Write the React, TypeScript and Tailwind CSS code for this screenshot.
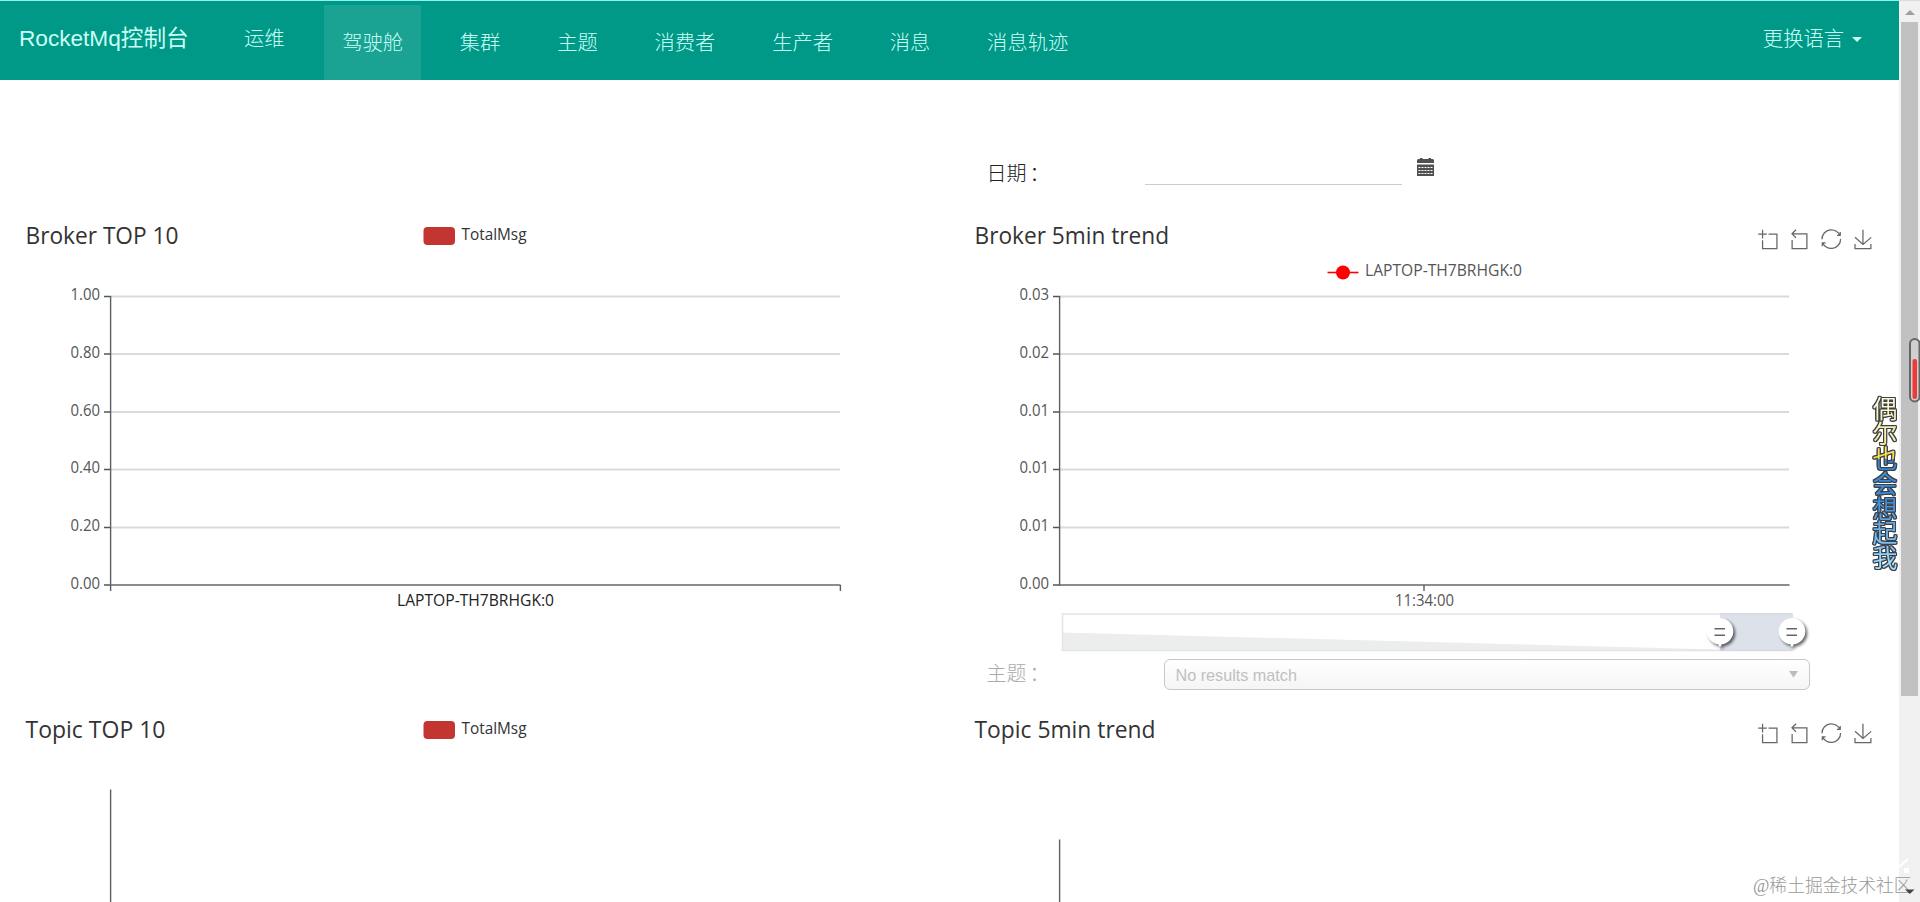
import React from "react";

const ICONS = [
  { x: 1758.2, d: "M0,13.5h26.9 M13.5,26.9V0 M32.1,13.5H58V58H13.5 V32.1", dx: 0, dy: 0, s: 0.323 },
  { x: 1792, d: "M22,1.4L9.9,13.5l12.3,12.3 M10.3,13.5H54.9v44.6 H10.3v-26", dx: -9.9, dy: -1.4, s: 0.331 },
  {
    x: 1822,
    d: "M47,18.9h9.8V8.7 M56.3,20.1 C52.1,9,40.5,0.6,26.8,2.1C12.6,3.7,1.6,16.2,2.1,30.6 M13,41.1H3.1v10.2 M3.7,39.9c4.2,11.1,15.8,19.5,29.5,18 c14.2-1.6,25.2-14.1,24.7-28.5",
    dx: -2.1,
    dy: -2,
    s: 0.333,
  },
  { x: 1855, d: "M4.7,22.9L29.3,45.5L54.7,23.4M4.6,43.6L4.6,58L53.8,58L53.8,43.6M29.2,45.1L29.2,0", dx: -4.6, dy: 0, s: 0.323 },
];

const GRID = [91.5, 149, 207, 264.5, 322.5, 380];

function T({ x, y, w, size = 15.5, fill = "#555", children }: { x: number; y: number; w: number; size?: number; fill?: string; children: string }) {
  return (
    <text x={x} y={y} fontSize={size} fill={fill} textLength={w} lengthAdjust="spacingAndGlyphs">
      {children}
    </text>
  );
}

function Toolbox() {
  return (
    <g fill="none" stroke="#666">
      {ICONS.map((i) => (
        <g key={i.x} transform={`translate(${i.x - 949} 24.8) scale(${i.s}) translate(${i.dx} ${i.dy})`}>
          <path d={i.d} strokeWidth={1.25 / i.s} />
        </g>
      ))}
    </g>
  );
}

function Axes({ labels }: { labels: string[] }) {
  return (
    <g>
      {GRID.map((y, i) => (
        <g key={y}>
          {i < 5 && <line x1="111" x2="840" y1={y} y2={y} stroke="#dadada" strokeWidth="1.9" />}
          <line x1="104" x2="111" y1={y} y2={y} stroke="#555" strokeWidth="1.5" />
          <T x={70.5} y={y + 3.5} w={29.5}>
            {labels[i]}
          </T>
        </g>
      ))}
      <line x1="110.6" x2="110.6" y1="91" y2="380" stroke="#5c5f62" strokeWidth="1.4" />
      <line x1="110" x2="840.5" y1="380" y2="380" stroke="#666" strokeWidth="1.7" />
    </g>
  );
}

function TopLegend() {
  return (
    <g>
      <rect x="423.5" y="22" width="31.5" height="18" rx="4" fill="#c23531" />
      <T x={461.5} y={35.4} w={65} fill="#333">
        TotalMsg
      </T>
    </g>
  );
}

function Handle({ x }: { x: number }) {
  return (
    <g>
      <path
        d={`M${x - 1.2} 441.5V439.6A13.3 13.3 0 1 1 ${x + 1.2} 439.6V441.5Z`}
        fill="#fff"
        className="drop-shadow-[2px_2px_1.5px_rgba(0,0,0,0.6)]"
      />
      <path d={`M${x - 5.5} 423.7h10.5M${x - 5.5} 430.3h10.5`} stroke="#666" strokeWidth="1.5" />
    </g>
  );
}

function Chart({ height, children }: { height: number; children: React.ReactNode }) {
  return (
    <svg width="949" height={height} className="block shrink-0 font-['Open_Sans','Noto_Sans',sans-serif]">
      {children}
    </svg>
  );
}

function NavItem({ label, active }: { label: string; active?: boolean }) {
  return <a className={`flex h-[75px] items-center px-[18.2px] pt-[2px] ${active ? "bg-white/10" : ""}`}>{label}</a>;
}

export default function App() {
  return (
    <div className="relative flex h-[902px] w-[1920px] overflow-hidden bg-white font-['Liberation_Sans','Noto_Sans_CJK_SC',sans-serif] text-[#333]">
      <div className="flex w-[1899px] flex-col">
        <header className="flex h-20 shrink-0 items-start border-t border-[#8ff0f0] bg-[#009886] text-[20.3px] font-light whitespace-nowrap text-[#c9fff6]">
          <span className="ml-[19px] w-[225px] pt-[20px] text-[22.7px] leading-[34px] font-normal tracking-[-0.04px]">RocketMq控制台</span>
          <span className="w-[80px] pt-[23px] leading-[30px]">运维</span>
          <nav className="flex gap-[20.4px] pt-1">
            <NavItem label="驾驶舱" active />
            <NavItem label="集群" />
            <NavItem label="主题" />
            <NavItem label="消费者" />
            <NavItem label="生产者" />
            <NavItem label="消息" />
            <NavItem label="消息轨迹" />
          </nav>
          <span className="mr-[37px] ml-auto flex items-center gap-[8px] pt-[23px] leading-[30px]">
            更换语言
            <svg width="10" height="5" className="block">
              <path d="M0 0h10l-5 5z" fill="#c9fff6" />
            </svg>
          </span>
        </header>

        <main className="flex min-h-0 flex-1">
          <section className="flex w-[949px] shrink-0 flex-col pt-[125px]">
            <Chart height={494}>
              <T x={25.5} y={39} w={153} size={23.4} fill="#333">
                Broker TOP 10
              </T>
              <TopLegend />
              <Axes labels={["1.00", "0.80", "0.60", "0.40", "0.20", "0.00"]} />
              <path d="M110.6 380v6M840.4 380v6" stroke="#5c5f62" strokeWidth="1.4" />
              <T x={397} y={400.7} w={157} fill="#222">
                LAPTOP-TH7BRHGK:0
              </T>
            </Chart>
            <Chart height={203}>
              <T x={25.5} y={39} w={140} size={23.4} fill="#333">
                Topic TOP 10
              </T>
              <TopLegend />
              <line x1="110.6" x2="110.6" y1="90.5" y2="203" stroke="#5c5f62" strokeWidth="1.4" />
            </Chart>
          </section>

          <section className="flex w-[950px] shrink-0 flex-col">
            <div className="flex h-[125px] shrink-0 items-start pl-[37.5px]">
              <span className="flex w-[158.5px] gap-[3px] pt-[79px] text-[20px] leading-[30px] font-light text-[#222]">
                <span>日期</span>
                <span>：</span>
              </span>
              <span className="h-[105px] w-[257px] border-b border-[#ccc]" />
              <svg width="17" height="18" className="mt-[78px] ml-[15px] block">
                <path d="M0 5V2.5Q0 1 1.5 1H3V0h2.5v1h6V0H14v1h1.5Q17 1 17 2.5V5z" fill="#505050" />
                <path d="M0 6.5h17V18H0z" fill="#505050" />
                <path d="M1.5 9.5h14M1.5 12.5h14M1.5 15.5h14" stroke="#fff" strokeWidth="1.2" strokeDasharray="2 1" />
              </svg>
            </div>
            <Chart height={450}>
              <T x={25.5} y={39} w={194.5} size={23.4} fill="#333">
                Broker 5min trend
              </T>
              <Toolbox />
              <path d="M378.5 67.5h31" stroke="#f00" strokeWidth="1.6" />
              <circle cx="394" cy="67.5" r="7" fill="#f00" />
              <T x={416} y={71.4} w={157}>
                LAPTOP-TH7BRHGK:0
              </T>
              <Axes labels={["0.03", "0.02", "0.01", "0.01", "0.01", "0.00"]} />
              <path d="M475 380v6" stroke="#5c5f62" strokeWidth="1.4" />
              <T x={446} y={400.7} w={59}>
                11:34:00
              </T>
              <path d="M114 427.5L771 444.5H843V445.5H114z" fill="#eceeee" />
              <rect x="113.5" y="409" width="730" height="36.5" fill="none" stroke="#e4e4e4" strokeWidth="1.5" />
              <rect x="771" y="408.5" width="72" height="37.5" fill="#dce1ea" />
              <path d="M771 409h72M771 445.3h72" stroke="#d6dade" strokeWidth="1.5" />
              <Handle x={771} />
              <Handle x={843} />
            </Chart>
            <div className="flex h-[44px] shrink-0 items-start pl-[37.5px] text-[#aaa]">
              <span className="flex w-[177.5px] gap-[3px] pt-[4px] text-[20px] leading-[30px] font-light">
                <span>主题</span>
                <span>：</span>
              </span>
              <span className="mt-[4px] flex h-[31px] w-[646px] items-center justify-between rounded-[6px] border border-[#c8c8c8] bg-linear-to-b from-white to-[#f5f5f5] pr-[11px] pl-[10.5px] text-[16.2px] text-[#c0c0c0]">
                <span className="pt-[2px]">No results match</span>
                <svg width="9" height="7" className="mb-px block">
                  <path d="M0 0h9L4.5 6.5z" fill="#bbb" />
                </svg>
              </span>
            </div>
            <Chart height={203}>
              <T x={25.5} y={39} w={181} size={23.4} fill="#333">
                Topic 5min trend
              </T>
              <Toolbox />
              <line x1="110.6" x2="110.6" y1="140.5" y2="203" stroke="#5c5f62" strokeWidth="1.4" />
            </Chart>
          </section>
        </main>
      </div>

      <aside className="flex w-[21px] flex-col items-center border-t border-[#d8dcdc] bg-[#f1f1f1]">
        <svg width="10" height="5" className="mt-[9px] mb-[7px] block shrink-0">
          <path d="M0 5L5 0l5 5z" fill="#a0a0a0" />
        </svg>
        <span className="h-[674px] w-[17px] shrink-0 bg-[#c1c1c1]" />
      </aside>

      <svg width="12" height="68" className="absolute top-[336px] left-[1908px]">
        <rect x="2" y="3" width="9.5" height="62.5" rx="4.75" fill="#d0d0d0" stroke="#666" strokeWidth="2" />
        <rect x="4.5" y="23" width="4.5" height="40" rx="2" fill="#f03a3a" />
      </svg>
      <div className="absolute top-[396px] left-[1870px] [filter:drop-shadow(1px_0_0_#3c3f46)_drop-shadow(-1px_0_0_#3c3f46)_drop-shadow(0_1px_0_#3c3f46)_drop-shadow(0_-1px_0_#3c3f46)]">
        <div className="bg-[linear-gradient(180deg,#fffbe0_0%,#f8eda0_25%,#f6d93c_36%,#3a86cf_36%,#3f8fdc_60%,#a8e2ff_100%)] bg-clip-text text-[24.9px] leading-[30px] font-normal whitespace-nowrap text-transparent [font-family:'Noto_Sans_CJK_SC',sans-serif] [writing-mode:vertical-rl]">
          偶尔也会想起我
        </div>
      </div>

      <span className="absolute top-[872px] left-[1753px] text-[17.8px] leading-[28px] font-light whitespace-nowrap text-[#999] [font-family:'Liberation_Serif','Noto_Sans_CJK_SC',serif]">
        @稀土掘金技术社区
      </span>
      <svg width="24" height="40" className="absolute top-[856px] left-[1896px]">
        <path d="M3 11L12 3" stroke="#fff" strokeWidth="2" />
        <path d="M8 12h5v5H8z" fill="#fff" />
        <path d="M9 33.5h9.5l-4.7 4.5z" fill="#444" />
      </svg>
    </div>
  );
}
